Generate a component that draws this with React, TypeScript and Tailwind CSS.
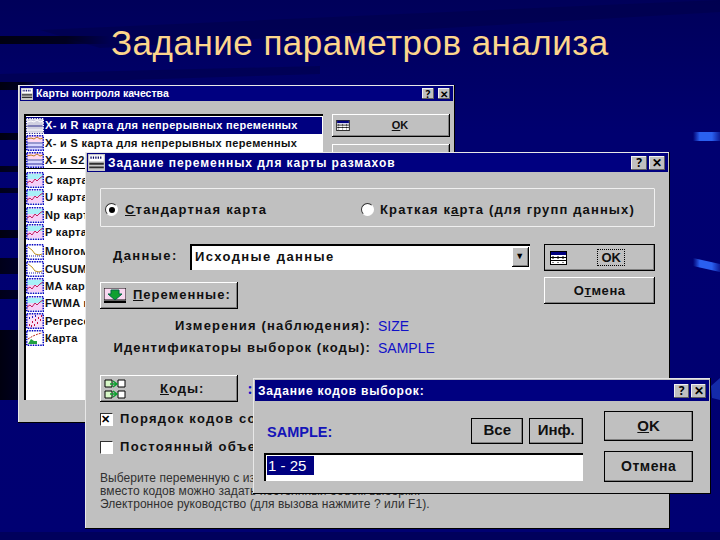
import type { ReactNode } from 'react'

const raised = 'shadow-[inset_-1px_-1px_0_#000,inset_1px_1px_0_#fff,inset_-2px_-2px_0_#808080]'
const dialogText = "font-['Liberation_Sans',sans-serif] font-bold text-[#101010]"

type IconKind = 'xbar' | 'line' | 'multi' | 'scatter' | 'area'

function ChartIcon({ kind, selected }: { kind: IconKind; selected?: boolean }) {
  const frame = selected ? '#ffffff' : '#0000c0'
  return (
    <svg width="18" height="16" viewBox="0 0 18 16" className="shrink-0">
      <rect x="0.75" y="0.75" width="16.5" height="14.5" fill={selected ? '#00006e' : '#ffffff'} />
      {kind === 'xbar' && (
        <>
          <rect x="1" y="1" width="16" height="6" fill={selected ? '#d0d0e0' : '#ffd8f0'} />
          <rect x="1" y="9" width="16" height="6" fill={selected ? '#d0d0e0' : '#d8d8ff'} />
          <path d="M1 4l4-1 3 1 3-2 3 2 3-1" fill="none" stroke={selected ? '#ffffff' : '#c08020'} />
          <path d="M1 8h16M1 12h16" stroke={selected ? '#ffffff' : '#3030a0'} />
        </>
      )}
      {kind === 'line' && (
        <>
          <rect x="1" y="2" width="16" height="5" fill="#a8f0f8" />
          <rect x="1" y="7" width="16" height="7" fill="#f4d0f8" />
          <path d="M1 11l3-2 2 2 3-4 2 2 3-3 3-2" fill="none" stroke="#c02060" />
        </>
      )}
      {kind === 'multi' && (
        <>
          <path d="M2 3l4 3 3 4 4 1 3-1" fill="none" stroke="#c09020" />
          <path d="M1 12h16" stroke="#1a1ab0" strokeDasharray="1 1" />
        </>
      )}
      {kind === 'scatter' && (
        <>
          <rect x="1" y="1" width="16" height="14" fill="#f8e0f8" />
          <path d="M3 12h1M6 9h1M5 13h1M9 7h1M11 10h1M12 5h1M15 3h1M14 7h1M8 12h1" stroke="#c01040" strokeWidth="2" />
          <path d="M3 5h1M6 4h1M9 3h1" stroke="#2020c0" strokeWidth="2" />
        </>
      )}
      {kind === 'area' && (
        <>
          <path d="M2 14l3-5 3 2 3 0 0 3z" fill="#20a040" />
          <path d="M2 9l5-3 5-2 4-1" fill="none" stroke="#c03020" strokeDasharray="2 1" />
        </>
      )}
      <rect x="0.75" y="0.75" width="16.5" height="14.5" fill="none" stroke={frame} strokeWidth="1.5" strokeDasharray="1.5 1" />
    </svg>
  )
}

function TableIcon({ small }: { small?: boolean }) {
  return (
    <svg width={small ? 14 : 17} height={small ? 11 : 14} viewBox="0 0 17 14" className="shrink-0">
      <rect x="0.5" y="0.5" width="16" height="13" fill="#ffffff" stroke="#000000" />
      <rect x="1" y="1" width="15" height="3" fill="#000080" />
      <path d="M1 6.5h15M1 9.5h15" stroke="#000000" />
      <path d="M3 5v8M8 5v8M13 5v8" stroke="#000000" strokeDasharray="1 1" />
    </svg>
  )
}

function VariablesIcon() {
  return (
    <svg width="22" height="16" viewBox="0 0 22 16">
      <rect x="0" y="0" width="22" height="12" fill="#f8d8f0" stroke="#000" />
      <path d="M7 2h8v4h3l-7 6-7-6h3z" fill="#10a030" stroke="#064" />
      <path d="M0 14h22" stroke="#000" strokeWidth="2" />
    </svg>
  )
}

function CodesIcon() {
  return (
    <svg width="22" height="20" viewBox="0 0 22 20">
      <path d="M1 1h7v7H1zM1 12h7v7H1z" fill="#d8f8c8" stroke="#000" />
      <path d="M14 1h7v7h-7zM14 12h7v7h-7z" fill="#ffffff" stroke="#000" />
      <path d="M6 5h6M9 2l4 3-4 3M6 15h6M9 12l4 3-4 3" fill="none" stroke="#10a030" strokeWidth="1.5" />
    </svg>
  )
}

function AppIcon({ size }: { size: number }) {
  return (
    <svg width={size} height={size} viewBox="0 0 14 14" className="shrink-0">
      <rect width="14" height="14" fill="#c8c8c8" />
      <rect x="1" y="1" width="12" height="5" fill="#ffffff" />
      <path d="M2 3h10" stroke="#000060" strokeDasharray="1 1" strokeWidth="2" />
      <path d="M1 8h12M1 11h12" stroke="#303030" strokeWidth="1.5" />
    </svg>
  )
}

function CaptionButton({ children, className }: { children: ReactNode; className: string }) {
  return (
    <span className={`flex items-center justify-center bg-[#c0c0c0] leading-none font-bold text-black shadow-[inset_-1px_-1px_0_#606060,inset_1px_1px_0_#f0f0f0] ${className}`}>
      {children}
    </span>
  )
}

function Win95Button({ children, className = '', strong }: { children: ReactNode; className?: string; strong?: boolean }) {
  return (
    <div className={`flex items-center bg-[#c0c0c0] ${dialogText} ${raised} ${strong ? 'outline -outline-offset-1 outline-black' : ''} ${className}`}>
      {children}
    </div>
  )
}

function Window({ title, titleClass, barClass, iconSize, captionClass, captionGap, className, children }: {
  title: string
  titleClass: string
  barClass: string
  iconSize?: number
  captionClass: string
  captionGap: string
  className: string
  children: ReactNode
}) {
  return (
    <div className={`absolute bg-[#c0c0c0] shadow-[inset_-1px_-1px_0_#000,inset_1px_1px_0_#e8e8e8] ${className}`}>
      <div className={`flex items-center bg-[#000080] pr-[3px] pl-[1px] ${barClass}`}>
        {iconSize ? <AppIcon size={iconSize} /> : null}
        <span className={`ml-[3px] flex-1 whitespace-nowrap text-white ${titleClass}`}>{title}</span>
        <div className={`flex ${captionGap}`}>
          <CaptionButton className={captionClass}>?</CaptionButton>
          <CaptionButton className={captionClass}>✕</CaptionButton>
        </div>
      </div>
      {children}
    </div>
  )
}

const chartRows: { label: string; kind: IconKind; gap?: string; divider?: boolean }[] = [
  { label: 'X- и S карта для непрерывных переменных', kind: 'xbar' },
  { label: 'X- и S2 карта для непрерывных переменных', kind: 'xbar', divider: true },
  { label: 'C карта', kind: 'line' },
  { label: 'U карта', kind: 'line' },
  { label: 'Np карта', kind: 'line' },
  { label: 'P карта', kind: 'line', gap: 'mb-[2px]' },
  { label: 'Многомерные', kind: 'multi' },
  { label: 'CUSUM', kind: 'multi' },
  { label: 'MA карта', kind: 'line' },
  { label: 'FWMA карта', kind: 'line' },
  { label: 'Регрессионная', kind: 'scatter' },
  { label: 'Карта', kind: 'area' },
]

function ChartsWindow() {
  return (
    <Window
      title="Карты контроля качества"
      titleClass="text-[10.5px] font-bold font-['Liberation_Sans',sans-serif]"
      barClass="h-[15px]"
      iconSize={12}
      captionClass="h-[11px] w-[12px] text-[10px]"
      captionGap="gap-[4px]"
      className="top-[85px] left-[18px] h-[338px] w-[437px] pt-px pr-[2px] pl-[2px]"
    >
      <div className="flex gap-[9px] pt-[13px] pr-[3px] pl-[4px]">
        <div className="h-[286px] w-[299px] overflow-hidden border-t-2 border-l-2 border-t-black border-l-black bg-white pr-px">
          <div className="mt-px flex h-[17px] items-center gap-[1px] bg-[#000080] text-[11px] font-bold tracking-[0.33px] whitespace-nowrap text-white font-['Liberation_Sans',sans-serif]">
            <ChartIcon kind="xbar" selected />
            X- и R карта для непрерывных переменных
          </div>
          {chartRows.map((row) => (
            <div
              key={row.label}
              className={`flex h-[17.4px] items-center gap-[1px] pt-px text-[11px] font-bold tracking-[0.33px] whitespace-nowrap text-[#101010] font-['Liberation_Sans',sans-serif] ${row.divider ? 'mb-[2px] border-b border-black' : ''} ${row.gap ?? ''}`}
            >
              <ChartIcon kind={row.kind} />
              {row.label}
            </div>
          ))}
        </div>
        <div className="flex w-[118px] flex-col gap-[7px]">
          <Win95Button className="h-[23px] pl-[4px] text-[11px]">
            <TableIcon small />
            <span className="flex-1 text-center"><u>O</u>K</span>
          </Win95Button>
          <Win95Button className="h-[23px]">
            <span />
          </Win95Button>
        </div>
      </div>
    </Window>
  )
}

function Radio({ checked }: { checked?: boolean }) {
  return (
    <span className="flex h-[13px] w-[13px] shrink-0 items-center justify-center rounded-full border border-t-[#303030] border-r-white border-b-white border-l-[#303030] bg-white">
      {checked ? <span className="h-[6px] w-[6px] rounded-full bg-black" /> : null}
    </span>
  )
}

function Checkbox({ checked }: { checked?: boolean }) {
  return (
    <span className="flex h-[13px] w-[13px] shrink-0 items-center justify-center border border-t-[#303030] border-r-white border-b-white border-l-[#303030] bg-white text-[11px] leading-none font-bold text-black">
      {checked ? '✕' : ''}
    </span>
  )
}

function VariablesWindow() {
  return (
    <Window
      title="Задание переменных для карты размахов"
      titleClass="text-[12px] font-bold tracking-[0.95px] font-['Liberation_Sans',sans-serif]"
      barClass="h-[19px]"
      iconSize={17}
      captionClass="h-[14px] w-[16px] text-[12px]"
      captionGap="gap-[2px]"
      className="top-[152px] left-[85px] h-[377px] w-[585px] pt-px pr-[2px] pl-[2px]"
    >
      <div className="px-[13px] pt-[16px]">
        <div className={`flex h-[39px] items-center rounded-[1px] border border-[#f0f0f0] pt-[4px] pl-[4px] text-[13px] tracking-[1.2px] ${dialogText}`}>
          <div className="flex w-[256px] items-center gap-[7px]">
            <Radio checked />
            <span><u>С</u>тандартная карта</span>
          </div>
          <div className="flex items-center gap-[6px]">
            <Radio />
            <span className="tracking-[1.13px]">Краткая к<u>а</u>рта (для групп данных)</span>
          </div>
        </div>

        <div className="mt-[17px] flex">
          <div className="flex w-[446px] flex-col">
            <div className={`flex h-[27px] items-start text-[13px] tracking-[1.4px] ${dialogText}`}>
              <span className="w-[90px] pt-[2px] pl-[13px]"><u>Д</u>анные:</span>
              <div className="flex h-[26px] w-[340px] items-center border-t-2 border-l-2 border-t-black border-l-black bg-white pr-px pb-[2px] pl-[3px]">
                <span className="flex-1">Исходные данные</span>
                <span className={`flex h-[20px] w-[17px] items-center justify-center bg-[#c0c0c0] text-[9px] text-black ${raised}`}>▼</span>
              </div>
            </div>
            <Win95Button className="mt-[11px] h-[27px] w-[138px] pl-[4px] text-[13px] tracking-[1px]">
              <VariablesIcon />
              <span className="ml-[7px] pb-[2px]"><u>П</u>еременные:</span>
            </Win95Button>
          </div>
          <div className="flex w-[111px] flex-col gap-[6px]">
            <Win95Button strong className="h-[27px] pl-[6px] text-[13px]">
              <TableIcon />
              <span className="flex-1 text-center">
                <span className="border border-dotted border-black px-[3px]">OK</span>
              </span>
            </Win95Button>
            <Win95Button className="h-[27px] justify-center text-[13px] tracking-[0.6px]">
              О<u>т</u>мена
            </Win95Button>
          </div>
        </div>

        <div className={`mt-[9px] grid grid-cols-[271px_auto] gap-x-[7px] gap-y-[6px] text-[13px] leading-[16px] ${dialogText}`}>
          <span className="text-right tracking-[1.2px]">Измерения (наблюдения):</span>
          <span className="text-[14px] font-normal text-[#1010c8]">SIZE</span>
          <span className="text-right tracking-[1.1px]">Идентификаторы выборок (коды):</span>
          <span className="text-[14px] font-normal text-[#1010c8]">SAMPLE</span>
        </div>

        <div className="mt-[19px] flex items-center gap-[10px]">
          <Win95Button className="h-[27px] w-[138px] pl-[4px] text-[13px] tracking-[1px]">
            <CodesIcon />
            <span className="ml-[34px]"><u>К</u>оды:</span>
          </Win95Button>
          <span className="text-[14px] font-bold text-[#1010c8]">:</span>
        </div>

        <div className={`mt-[9px] flex h-[16px] items-center gap-[7px] text-[13px] tracking-[1.3px] ${dialogText}`}>
          <Checkbox checked />
          <span className="whitespace-nowrap">Порядок кодов соответствует порядку наблюдений</span>
        </div>
        <div className={`mt-[12px] flex h-[16px] items-center gap-[7px] text-[13px] tracking-[1.3px] ${dialogText}`}>
          <Checkbox />
          <span className="whitespace-nowrap">Постоянный объем выборки</span>
        </div>

        <div className="mt-[17px] text-[12px] leading-[13px] tracking-[0.07px] whitespace-nowrap text-[#303030] font-['Liberation_Sans',sans-serif]">
          <p>Выберите переменную с измерениями и идентификаторами выборок,</p>
          <p>вместо кодов можно задать постоянный объем выборки.</p>
          <p>Электронное руководство (для вызова нажмите ? или F1).</p>
        </div>
      </div>
    </Window>
  )
}

function CodesWindow() {
  return (
    <Window
      title="Задание кодов выборок:"
      titleClass="text-[12px] font-bold tracking-[0.8px] font-['Liberation_Sans',sans-serif]"
      barClass="h-[21px] !pl-0"
      captionClass="h-[14px] w-[15px] text-[12px]"
      captionGap="gap-[2px]"
      className="top-[378px] left-[253px] h-[116px] w-[458px] p-[2px]"
    >
      <div className="flex pr-[16px] pl-[9px]">
        <div className="flex w-[320px] flex-col">
          <div className="mt-[16px] flex h-[27px] items-center justify-between">
            <span className="pt-[4px] pl-[3px] text-[14.5px] font-bold text-[#1414b8] font-['Liberation_Sans',sans-serif]">SAMPLE:</span>
            <div className="flex gap-[6px]">
              <Win95Button strong className="h-[26px] w-[52px] justify-center text-[15px]">Все</Win95Button>
              <Win95Button strong className="h-[26px] w-[54px] justify-center text-[15px]">Инф.</Win95Button>
            </div>
          </div>
          <div className="mt-[9px] h-[28px] border-t-2 border-l-2 border-t-black border-l-black bg-white p-[1px]">
            <span className="block h-[19px] w-[47px] bg-[#000080] pl-[1px] text-[15px] leading-[19px] whitespace-nowrap text-white font-['Liberation_Sans',sans-serif]">1 - 25</span>
          </div>
        </div>
        <div className="mt-[10px] ml-[21px] flex w-[89px] flex-col gap-[10px]">
          <Win95Button strong className="h-[30px] justify-center text-[15px]"><u>O</u>K</Win95Button>
          <Win95Button strong className="h-[31px] justify-center text-[14px] tracking-[0.5px]">Отмена</Win95Button>
        </div>
      </div>
    </Window>
  )
}

function Backdrop() {
  const stripes = [
    [36, 8, 110, 1], [82, 8, 40, 1], [133, 7, 40, 1], [166, 6, 40, 0.9], [188, 5, 40, 0.9],
    [230, 8, 40, 1], [258, 16, 40, 0.9], [290, 9, 40, 0.9], [330, 70, 40, 1],
  ]
  return (
    <svg width="720" height="540" className="absolute inset-0">
      <defs>
        <linearGradient id="bg" x1="0" y1="0" x2="0" y2="1">
          <stop offset="0" stopColor="#00005a" />
          <stop offset="0.25" stopColor="#000070" />
          <stop offset="1" stopColor="#000072" />
        </linearGradient>
        <linearGradient id="fade" x1="0" y1="0" x2="1" y2="0">
          <stop offset="0" stopColor="#000010" />
          <stop offset="0.6" stopColor="#000010" stopOpacity="0.8" />
          <stop offset="1" stopColor="#000010" stopOpacity="0" />
        </linearGradient>
        <linearGradient id="streak" x1="0" y1="0" x2="1" y2="0">
          <stop offset="0" stopColor="#2a5cf0" stopOpacity="0" />
          <stop offset="0.25" stopColor="#2a60f0" />
          <stop offset="0.7" stopColor="#2a60f0" />
          <stop offset="1" stopColor="#2a5cf0" stopOpacity="0.3" />
        </linearGradient>
      </defs>
      <rect width="720" height="540" fill="url(#bg)" />
      <path d="M40 30L720 0V12L100 48zM0 74L320 66V74L0 84z" fill="#000048" opacity="0.55" />
      {stripes.map(([y, h, w, o]) => (
        <rect key={y} x="0" y={y} width={w} height={h} fill="url(#fade)" opacity={o} />
      ))}
      <rect x="693" y="132" width="27" height="9" fill="url(#streak)" />
      <path d="M693 258L720 264V272L693 266z" fill="url(#streak)" />
      <path d="M711 386L720 378V400L712 398z" fill="#1c3cc0" opacity="0.7" />
      <rect x="0" y="532" width="720" height="8" fill="#00005c" />
    </svg>
  )
}

export default function App() {
  return (
    <div className="relative h-[540px] w-[720px] overflow-hidden bg-[#000070]">
      <Backdrop />
      <h1 className="absolute top-[24px] left-[111px] text-[35px] leading-[38px] tracking-[0.48px] whitespace-nowrap text-[#fcd68c] font-['Liberation_Sans',sans-serif]">
        Задание параметров анализа
      </h1>
      <ChartsWindow />
      <VariablesWindow />
      <CodesWindow />
    </div>
  )
}
